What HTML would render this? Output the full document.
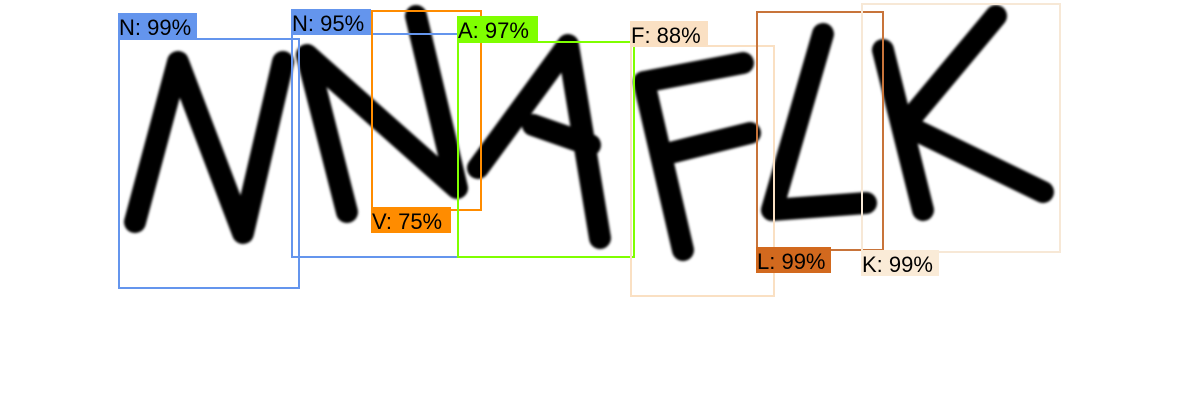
<!DOCTYPE html>
<html><head><style>
html,body{margin:0;padding:0;background:#fff;}
#c{position:relative;width:1200px;height:420px;overflow:hidden;font-family:"Liberation Sans",sans-serif;}
.b{position:absolute;box-sizing:border-box;border:2px solid;}
.l{position:absolute;font-size:22px;line-height:22px;height:22px;padding-top:4px;color:#000;padding-left:1px;white-space:nowrap;overflow:visible;}
svg{position:absolute;left:0;top:0;}
</style></head><body><div id="c">
<svg width="1200" height="420">
<defs><filter id="f"><feGaussianBlur stdDeviation="1.3"/></filter></defs>
<g stroke="#000" stroke-width="22" fill="none" stroke-linecap="round" stroke-linejoin="round" filter="url(#f)">
<path d="M135 222 L178 62 L243 233 L283 62"/>
<path d="M347 212 L307 55 L457 188 L416 16"/>
<path d="M478 168 L568 45 L600 238 M533 125 L590 145"/>
<path d="M683 250 L644 82 L743 63 M670 153 L750 133"/>
<path d="M823 34 L772 210 L866 203"/>
<path d="M883 50 L923 210 M996 16 L905 125 L1043 192"/>
</g>
</svg>
<div class="b" style="left:118px;top:38px;width:182px;height:251px;border-color:#6495ed"></div>
<div class="l" style="left:118px;top:13px;width:78px;background:#6495ed">N: 99%</div>
<div class="b" style="left:291px;top:33px;width:168px;height:225px;border-color:#6495ed"></div>
<div class="l" style="left:291px;top:9px;width:79px;background:#6495ed">N: 95%</div>
<div class="b" style="left:371px;top:10px;width:111px;height:201px;border-color:#ff8c00"></div>
<div class="l" style="left:371px;top:207px;width:79px;background:#ff8c00">V: 75%</div>
<div class="b" style="left:457px;top:41px;width:178px;height:217px;border-color:#7fff00"></div>
<div class="l" style="left:457px;top:16px;width:80px;background:#7fff00">A: 97%</div>
<div class="b" style="left:630px;top:45px;width:145px;height:252px;border-color:#fae0c3"></div>
<div class="l" style="left:630px;top:21px;width:77px;background:#fae0c3">F: 88%</div>
<div class="b" style="left:756px;top:11px;width:128px;height:240px;border-color:#c8743a"></div>
<div class="l" style="left:756px;top:247px;width:74px;background:#d2691e">L: 99%</div>
<div class="b" style="left:861px;top:3px;width:200px;height:250px;border-color:#f7e8d6"></div>
<div class="l" style="left:861px;top:250px;width:77px;background:#faebd7">K: 99%</div>
</div></body></html>
